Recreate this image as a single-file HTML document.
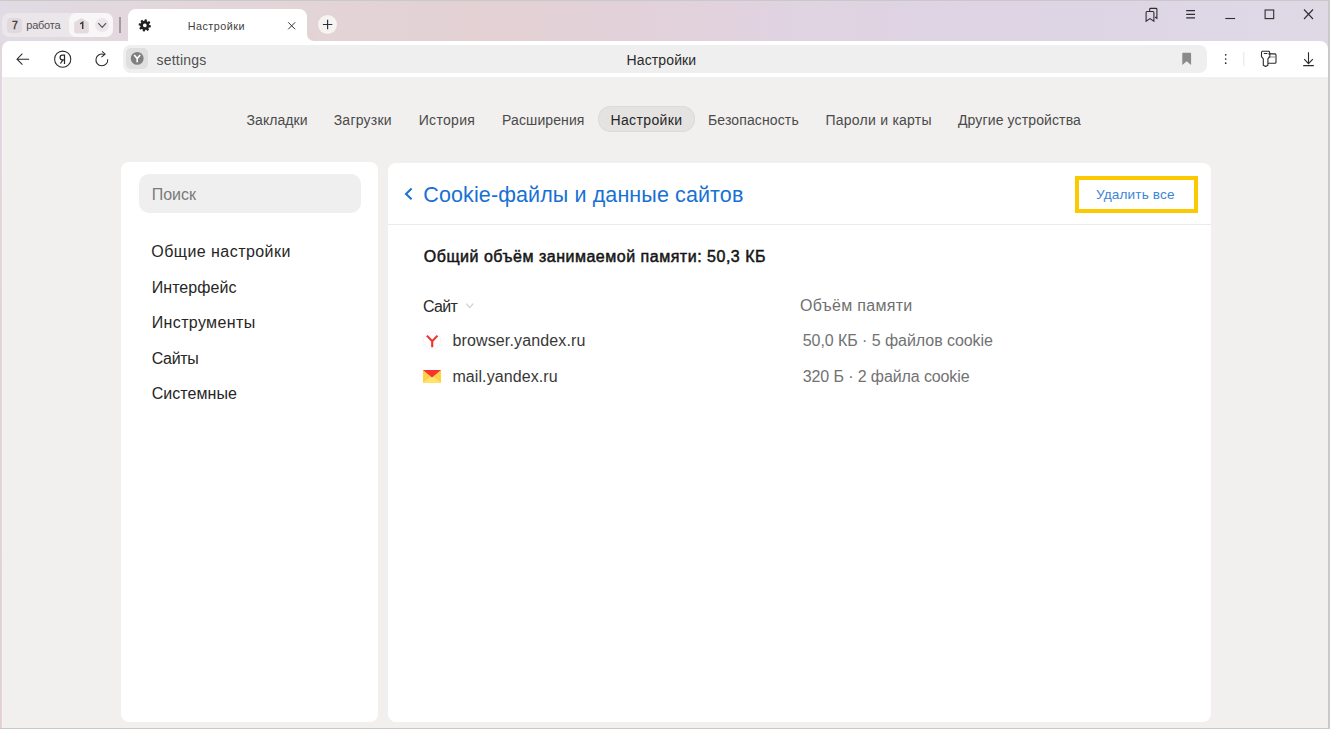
<!DOCTYPE html>
<html><head><meta charset="utf-8">
<style>
html,body{margin:0;padding:0}
body{width:1330px;height:729px;overflow:hidden;position:relative;background:#c9c9c9;font-family:"Liberation Sans",sans-serif}
.a{position:absolute}
.t{position:absolute;line-height:1;white-space:nowrap;font-family:"Liberation Sans",sans-serif}
svg{position:absolute;overflow:visible}
</style></head><body>
<!-- window frame -->
<div class="a" style="left:0;top:1px;width:1328px;height:727px;background:linear-gradient(90deg,#e0dbe4 0px,#e2d8dd 120px,#e3d4d7 300px,#e3d1d4 480px,#e2d1d9 640px,#e0d3e2 800px,#ded4e4 1000px,#ded6e5 1150px,#dfd9e6 1328px)"></div>
<div class="a" style="left:0;top:41px;width:2px;height:687px;background:linear-gradient(180deg,#e1d8e0,#e2d2d3)"></div>
<!-- page background -->
<div class="a" style="left:2px;top:70px;width:1326px;height:658px;background:#f1f0ee"></div>
<div class="a" style="left:2px;top:70px;width:1px;height:658px;background:#f5f4f3"></div>
<!-- toolbar -->
<div class="a" style="left:2px;top:41px;width:1325.5px;height:36px;background:#fff;border-radius:8px 8px 0 0"></div>

<!-- tab group pills -->
<div class="a" style="left:2px;top:13px;width:80px;height:24px;background:#ebe6ea;border-radius:7px"></div>
<div class="a" style="left:7.2px;top:18px;width:14.4px;height:14.5px;background:#e0d9de;border-radius:4px"></div>
<div class="t" style="left:12.0px;top:20.0px;font-size:10.5px;letter-spacing:0px;color:#3a3a3a;-webkit-text-stroke:0.35px #3a3a3a;">7</div>
<div class="t" style="left:26.3px;top:20.0px;font-size:11px;letter-spacing:-0.24px;color:#505050;">работа</div>
<div class="a" style="left:69px;top:13.4px;width:44px;height:23.2px;background:#f9f6f8;border-radius:7px"></div>
<svg style="left:74px;top:17.5px" width="15" height="16" viewBox="0 0 15 16"><path d="M7.5 0 L14.8 4.3 L14.8 13 Q14.8 15.5 12.3 15.5 L2.7 15.5 Q0.2 15.5 0.2 13 L0.2 4.3 Z" fill="#e5dade"/></svg>
<svg style="left:0;top:0" width="1" height="1"><path d="M80.2 23.9 L82.7 22.4 V29" fill="none" stroke="#3a3a3a" stroke-width="1.45" stroke-linejoin="miter"/></svg>
<div class="a" style="left:95.2px;top:18px;width:14px;height:14px;background:#ece7ea;border-radius:7px"></div>
<svg style="left:0;top:0" width="1" height="1"><path d="M98.3 23.2 L102.2 27.3 L106.1 23.2" fill="none" stroke="#555" stroke-width="1.2"/></svg>
<div class="a" style="left:119.2px;top:17px;width:1.8px;height:16px;background:#a29ca1"></div>

<!-- active tab -->
<div class="a" style="left:307px;top:33px;width:8px;height:8px;background:#fff"></div>
<div class="a" style="left:307px;top:31px;width:10px;height:10px;background:#e3d3d4;border-radius:0 0 0 7px"></div>
<div class="a" style="left:128px;top:8.6px;width:179px;height:34px;background:#fff;border-radius:8px 8px 0 0"></div>
<svg style="left:0;top:0" width="1" height="1">
 <g transform="translate(144.8,25.4) rotate(10)" fill="#222">
  <circle r="4.4"/>
  <path d="M-1 -6.1 H1 L1.5 -3 H-1.5 Z" transform="rotate(0)"/><path d="M-1 -6.1 H1 L1.5 -3 H-1.5 Z" transform="rotate(45)"/><path d="M-1 -6.1 H1 L1.5 -3 H-1.5 Z" transform="rotate(90)"/><path d="M-1 -6.1 H1 L1.5 -3 H-1.5 Z" transform="rotate(135)"/><path d="M-1 -6.1 H1 L1.5 -3 H-1.5 Z" transform="rotate(180)"/><path d="M-1 -6.1 H1 L1.5 -3 H-1.5 Z" transform="rotate(225)"/><path d="M-1 -6.1 H1 L1.5 -3 H-1.5 Z" transform="rotate(270)"/><path d="M-1 -6.1 H1 L1.5 -3 H-1.5 Z" transform="rotate(315)"/>
  <circle r="1.9" fill="#fff"/>
 </g>
 <path d="M288.2 22.3 L295.2 29.3 M295.2 22.3 L288.2 29.3" stroke="#333" stroke-width="1"/>
</svg>
<div class="t" style="left:187.7px;top:21.0px;font-size:10.8px;letter-spacing:0.488px;color:#404040;">Настройки</div>
<!-- new tab -->
<div class="a" style="left:318px;top:14.7px;width:19px;height:19px;background:#f6f3f3;border-radius:50%"></div>
<svg style="left:0;top:0" width="1" height="1"><path d="M327.6 19.8 V29.2 M322.9 24.5 H332.3" stroke="#2a2f3a" stroke-width="1.15"/></svg>

<!-- window controls -->
<svg style="left:0;top:0" width="1" height="1" fill="none" stroke="#2e2e2e" stroke-width="1.1">
 <path d="M1149.7 11 V9.3 Q1149.7 8.4 1150.6 8.4 H1156 Q1156.9 8.4 1156.9 9.3 V18.4 L1155.1 17"/>
 <path d="M1146.1 21.2 V12.5 Q1146.1 11.5 1147 11.5 H1153 Q1153.9 11.5 1153.9 12.5 V21.2 L1150 18.6 Z"/>
 <path d="M1186.2 10.6 H1195 M1186.2 14.3 H1195 M1186.2 17.9 H1195" stroke-width="1.2"/>
 <path d="M1225.3 18.5 H1235.1" stroke-width="1.1"/>
 <rect x="1265.1" y="10" width="8.6" height="8.6" stroke-width="1.1"/>
 <path d="M1304 9.5 L1313 19 M1313 9.5 L1304 19" stroke-width="1.1"/>
</svg>

<!-- toolbar icons -->
<svg style="left:0;top:0" width="1" height="1" fill="none" stroke="#2a2a2a" stroke-width="1.05">
 <path d="M17 59.2 H29.1 M22.4 53.7 L17 59.2 L22.4 64.7"/>
 <circle cx="62.7" cy="59.2" r="8.1" stroke-width="1.05"/>
 <path d="M107.7 59.2 A5.9 5.9 0 1 1 103.9 54.4" />
 <path d="M102.1 51.3 L105.1 54.2 L101.5 57.1" />
</svg>
<svg style="left:0;top:0" width="1" height="1"><path d="M64.5 54.6 V63.9 M64.5 55.1 H62.3 Q60.1 55.1 60.1 57.5 Q60.1 59.9 62.4 59.9 H64.5 M62.8 60.1 L60.4 63.5" fill="none" stroke="#2a2a2a" stroke-width="1.25"/></svg>

<!-- address field -->
<div class="a" style="left:123px;top:45px;width:1084px;height:28px;background:#efefef;border-radius:8px"></div>
<div class="a" style="left:126.3px;top:48px;width:21.4px;height:21.4px;background:#dfdfdf;border-radius:5px"></div>
<svg style="left:0;top:0" width="1" height="1">
 <circle cx="137.2" cy="58.4" r="6.4" fill="#808080"/>
 <path d="M134.2 54.9 L137.2 58.6 L140.2 54.9 M137.2 58.6 V62.3" stroke="#fff" stroke-width="1.6" fill="none"/>
</svg>
<div class="t" style="left:156.5px;top:53.0px;font-size:14px;letter-spacing:0.214px;color:#505050;">settings</div>
<div class="t" style="left:626.5px;top:53.0px;font-size:14px;letter-spacing:0.125px;color:#2a2a2a;">Настройки</div>
<svg style="left:0;top:0" width="1" height="1">
 <path d="M1182.3 53.6 Q1182.3 52.8 1183.1 52.8 H1190.3 Q1191.1 52.8 1191.1 53.6 V64.9 L1186.7 61.2 L1182.3 64.9 Z" fill="#8a8a8a"/>
 <circle cx="1225.7" cy="54.8" r="0.85" fill="#2a2a2a"/>
 <circle cx="1225.7" cy="59" r="0.85" fill="#2a2a2a"/>
 <circle cx="1225.7" cy="63.2" r="0.85" fill="#2a2a2a"/>
 <rect x="1243.4" y="52" width="0.9" height="14.2" fill="#e2e2e2"/>
 <g fill="none" stroke="#2a2a2a" stroke-width="1.1" stroke-linejoin="round">
  <path d="M1268.4 53.9 H1275 Q1276 53.9 1276 55 V62.3 Q1276 63.3 1275 63.3 H1267.9"/>
  <path d="M1268.4 57 H1275.6" stroke="#888" stroke-width="1"/>
  <path d="M1262.1 51.2 H1268.8 Q1269.8 52 1269.8 53 V56.6 L1267.9 58.8 V65.2 L1265.6 66.5 L1263.3 65.2 V58.8 L1261.5 56.6 V52.2 Z"/>
  <path d="M1263.8 53.5 H1267.4" stroke-width="1"/>
 </g>
 <path d="M1308.5 52.2 V63.6 M1304.2 59.1 L1308.5 63.6 L1312.8 59.1 M1303.2 65.6 H1313.8" stroke="#2a2a2a" stroke-width="1.1" fill="none"/>
</svg>

<!-- nav -->
<div class="a" style="left:598px;top:106.4px;width:97px;height:25.6px;background:#e4e3e1;border-radius:13px;box-shadow:inset 0 0 0 1px #dcdbd9"></div>
<div class="t" style="left:246.5px;top:113.0px;font-size:14px;letter-spacing:0.071px;color:#4a4a4a;">Закладки</div><div class="t" style="left:333.7px;top:113.0px;font-size:14px;letter-spacing:0.229px;color:#4a4a4a;">Загрузки</div><div class="t" style="left:418.7px;top:113.0px;font-size:14px;letter-spacing:0.317px;color:#4a4a4a;">История</div><div class="t" style="left:502.1px;top:113.0px;font-size:14px;letter-spacing:0.1px;color:#4a4a4a;">Расширения</div><div class="t" style="left:610.5px;top:113.0px;font-size:14px;letter-spacing:0.362px;color:#262626;">Настройки</div><div class="t" style="left:708.0px;top:113.0px;font-size:14px;letter-spacing:0.127px;color:#4a4a4a;">Безопасность</div><div class="t" style="left:825.4px;top:113.0px;font-size:14px;letter-spacing:0.254px;color:#4a4a4a;">Пароли и карты</div><div class="t" style="left:958.0px;top:113.0px;font-size:14px;letter-spacing:0.125px;color:#4a4a4a;">Другие устройства</div>

<!-- left card -->
<div class="a" style="left:121px;top:162px;width:257.2px;height:559.6px;background:#fff;border-radius:8px"></div>
<div class="a" style="left:139px;top:173.5px;width:222px;height:39.5px;background:#efefef;border-radius:10px"></div>
<div class="t" style="left:151.7px;top:187.0px;font-size:16px;letter-spacing:-0.025px;color:#7a7a7a;">Поиск</div>
<div class="t" style="left:151.3px;top:244.0px;font-size:16px;letter-spacing:0.45px;color:#262626;">Общие настройки</div><div class="t" style="left:151.7px;top:280.0px;font-size:16px;letter-spacing:0.062px;color:#262626;">Интерфейс</div><div class="t" style="left:151.7px;top:315.0px;font-size:16px;letter-spacing:0.37px;color:#262626;">Инструменты</div><div class="t" style="left:151.7px;top:351.0px;font-size:16px;letter-spacing:-0.325px;color:#262626;">Сайты</div><div class="t" style="left:151.7px;top:386.0px;font-size:16px;letter-spacing:0.062px;color:#262626;">Системные</div>

<!-- main card -->
<div class="a" style="left:388px;top:162.5px;width:823px;height:559.1px;background:#fff;border-radius:8px"></div>
<div class="a" style="left:388px;top:223.8px;width:823px;height:1px;background:#ebebeb"></div>
<svg style="left:0;top:0" width="1" height="1"><path d="M411.6 188.6 L406 193.9 L411.6 199.2" fill="none" stroke="#1870d4" stroke-width="2"/></svg>
<div class="t" style="left:423.3px;top:185.0px;font-size:21.5px;letter-spacing:0.111px;color:#1870d4;">Cookie-файлы и данные сайтов</div>
<div class="a" style="left:1075px;top:176px;width:115px;height:29px;border:4px solid #fcc800"></div>
<div class="t" style="left:1096.1px;top:188.0px;font-size:13.6px;letter-spacing:0.13px;color:#3d84d8;">Удалить все</div>
<div class="t" style="left:423.8px;top:249.0px;font-size:16px;letter-spacing:0.511px;color:#151515;-webkit-text-stroke:0.5px #151515;">Общий объём занимаемой памяти: 50,3 КБ</div>
<div class="t" style="left:422.9px;top:299.0px;font-size:16px;letter-spacing:-0.667px;color:#2a2a2a;">Сайт</div>
<svg style="left:0;top:0" width="1" height="1"><path d="M466.4 303.6 L469.8 307.6 L473.2 303.6" fill="none" stroke="#cfcfcf" stroke-width="1.2"/></svg>
<div class="t" style="left:800.1px;top:298.0px;font-size:16px;letter-spacing:0.291px;color:#707070;">Объём памяти</div>
<svg style="left:0;top:0" width="1" height="1">
 <circle cx="432" cy="340.4" r="8.6" fill="#fff" stroke="#f0f0f0" stroke-width="0.8"/>
 <path d="M426.9 335.6 L432.2 341.3 L437.5 335.6 M432.2 341.3 V347.3" fill="none" stroke="#f0302c" stroke-width="2.1"/>
 <rect x="423" y="370" width="18" height="12.8" fill="#fdd14a"/>
 <path d="M423 382.8 L432 375.5 L441 382.8 Z" fill="#fee569"/>
 <path d="M423 370 H441 L432 377.6 Z" fill="#f9332d"/>
</svg>
<div class="t" style="left:452.4px;top:333.0px;font-size:16px;letter-spacing:0.144px;color:#383838;">browser.yandex.ru</div><div class="t" style="left:452.4px;top:369.0px;font-size:16px;letter-spacing:0.092px;color:#383838;">mail.yandex.ru</div><div class="t" style="left:802.7px;top:333.0px;font-size:16px;letter-spacing:-0.054px;color:#727272;">50,0 КБ · 5 файлов cookie</div><div class="t" style="left:802.7px;top:369.0px;font-size:16px;letter-spacing:-0.105px;color:#727272;">320 Б · 2 файла cookie</div>
</body></html>
